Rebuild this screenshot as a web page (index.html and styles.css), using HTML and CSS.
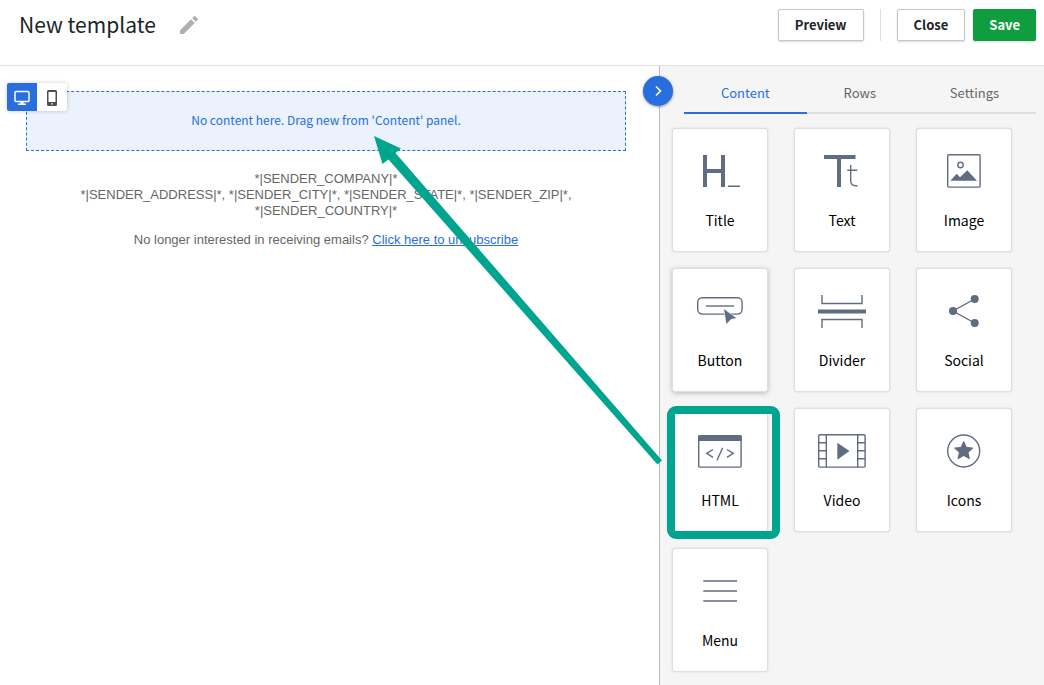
FILE: index.html
```html
<!DOCTYPE html>
<html lang="en">
<head>
<meta charset="utf-8">
<title>New template</title>
<link rel="stylesheet" href="styles.css">
</head>
<body>
<header class="topbar">
  <h1 class="topbar-title">New template</h1>
  <button class="edit-button" type="button" aria-label="Rename template">
    <svg width="24" height="24" viewBox="0 0 24 24" fill="#adafb1"><path d="M3 17.25V21h3.75L17.81 9.94l-3.75-3.75zM20.71 7.04a1 1 0 0 0 0-1.41l-2.34-2.34a1 1 0 0 0-1.41 0l-1.83 1.83 3.75 3.75z"/></svg>
  </button>
  <div class="actions">
    <button class="btn" type="button">Preview</button>
    <span class="separator"></span>
    <button class="btn" type="button">Close</button>
    <button class="btn btn-primary" type="button">Save</button>
  </div>
</header>
<div class="editor">
  <main class="canvas">
    <div class="device-switch">
      <button class="device device-active" type="button" aria-label="Desktop view">
        <svg width="16" height="16" viewBox="0 0 16 16"><rect x="1" y="1.500" width="14" height="10" rx="1" fill="none" stroke="#fff" stroke-width="1.500"/><path d="M6.500 12h3v1.500H12V15H4v-1.500h2.500z" fill="#fff"/></svg>
      </button>
      <button class="device" type="button" aria-label="Mobile view">
        <svg width="16" height="16" viewBox="0 0 16 16"><path fill="#4c4f52" fill-rule="evenodd" d="M4.500 0h7A1.500 1.500 0 0 1 13 1.500v13a1.500 1.500 0 0 1-1.500 1.500h-7A1.500 1.500 0 0 1 3 14.500v-13A1.500 1.500 0 0 1 4.500 0zM4.500 2v10h7V2zM7.200 13.200v1.300h1.600v-1.300z"/></svg>
      </button>
    </div>
    <div class="dropzone">No content here. Drag new from 'Content' panel.</div>
    <footer class="mail-footer">
      <p>*|SENDER_COMPANY|*<br>*|SENDER_ADDRESS|*, *|SENDER_CITY|*, *|SENDER_STATE|*, *|SENDER_ZIP|*,<br>*|SENDER_COUNTRY|*</p>
      <p>No longer interested in receiving emails? <a href="#unsubscribe">Click here to unsubscribe</a></p>
    </footer>
  </main>
  <aside class="panel">
    <button class="collapse" type="button" aria-label="Collapse panel">
      <svg width="12" height="12" viewBox="0 0 12 12" fill="none" stroke="#fff" stroke-width="1.600"><path d="M4 1.500 8.500 6 4 10.500"/></svg>
    </button>
    <div class="tabs" role="tablist">
      <button class="tab tab-active" type="button" role="tab" aria-selected="true">Content</button>
      <button class="tab" type="button" role="tab" aria-selected="false">Rows</button>
      <button class="tab" type="button" role="tab" aria-selected="false">Settings</button>
    </div>
    <div class="blocks">
      <button class="block" type="button">
        <svg class="icon" viewBox="0 0 48 48"><path class="solid" d="M7 8h4v14h14V8h4v32h-4V26H11v14H7zM32 38.500h12V40H32z"/></svg>
        <span>Title</span>
      </button>
      <button class="block" type="button">
        <svg class="icon" viewBox="0 0 48 48"><path class="solid" d="M6 8h31.500v4H23v28h-4V12H6z"/><path class="line" d="M32.700 18v15.500q0 5.200 5 5.200h1.800M29.300 23.300h10"/></svg>
        <span>Text</span>
      </button>
      <button class="block" type="button">
        <svg class="icon" viewBox="0 0 48 48"><rect class="line" x="7.700" y="7.700" width="32.400" height="32.400" rx="1"/><circle class="line" cx="20.500" cy="18" r="2.700"/><path class="solid" d="M10.300 33.700l6.400-7 3.300 3.600 7.300-7 9.700 10.400z"/></svg>
        <span>Image</span>
      </button>
      <button class="block block-raised" type="button">
        <svg class="icon" viewBox="0 0 48 48"><rect class="line" x="1.700" y="10.700" width="44.400" height="16.400" rx="4.500"/><path class="line" d="M10 19h28"/><path class="solid" stroke="#fff" stroke-width=".6" d="M27.600 21.500l13.400 9.800-5.800 1-5 5.200z"/></svg>
        <span>Button</span>
      </button>
      <button class="block" type="button">
        <svg class="icon" viewBox="0 0 48 48"><path class="solid" d="M0 22.500h48v4H0z"/><path class="line" d="M4 8v8.500h40V8M4 41v-8.500h40V41"/></svg>
        <span>Divider</span>
      </button>
      <button class="block" type="button">
        <svg class="icon" viewBox="0 0 48 48"><path class="line" d="M34.700 12 13 24l21.700 12"/><g class="solid"><circle cx="34.700" cy="12" r="4"/><circle cx="13" cy="24" r="4"/><circle cx="34.700" cy="36" r="4"/></g></svg>
        <span>Social</span>
      </button>
      <button class="block block-marked" type="button">
        <svg class="icon" viewBox="0 0 48 48"><rect class="line" x="2.700" y="8.700" width="42.400" height="31.400" rx="1"/><path class="solid" d="M2 8.500h43.700V14H2z"/><path class="line" d="M17 22.500l-6.300 3.800 6.300 4M26.700 20.700 21 33.300M31 22.500l6.300 3.800-6.300 4"/></svg>
        <span>HTML</span>
      </button>
      <button class="block" type="button">
        <svg class="icon" viewBox="0 0 48 48"><rect class="line" x=".7" y="7.700" width="46.400" height="32.400" rx="1"/><path class="line" d="M8.300 8v32M39.700 8v32M1 15.700h7.300M1 23.700h7.300M1 31.700h7.300M39.700 15.700H47M39.700 23.700H47M39.700 31.700H47"/><path class="solid" d="M19.300 15.700l12.200 8.400-12.200 8.600z"/></svg>
        <span>Video</span>
      </button>
      <button class="block" type="button">
        <svg class="icon" viewBox="0 0 48 48"><circle class="line" cx="23.700" cy="24" r="16"/><path class="solid" stroke="#606d80" stroke-width="1" stroke-linejoin="round" d="M23.700 14.500l2.700 5.900 6.400.7-4.800 4.300 1.400 6.300-5.700-3.200-5.700 3.200 1.400-6.300-4.800-4.300 6.400-.7z"/></svg>
        <span>Icons</span>
      </button>
      <button class="block" type="button">
        <svg class="icon" viewBox="0 0 48 48"><path class="line" d="M7.300 14H41M7.300 24H41M7.300 34H41"/></svg>
        <span>Menu</span>
      </button>
    </div>
    <svg class="arrow" viewBox="0 0 290 330" aria-hidden="true"><path d="M0 0l27 12.500-5.500 4.500L288 324.500l-4.500 4L14.500 23.500l-6 4.500z"/></svg>
  </aside>
</div>
</body>
</html>
```
FILE: styles.css
```css
* {
  box-sizing: border-box;
}

body {
  margin: 0;
  min-height: 100vh;
  display: flex;
  flex-direction: column;
  background: #fff;
  color: #202428;
  font-family: "Noto Sans CJK SC", "Open Sans", sans-serif;
  font-size: 13px;
  line-height: 20px;
}

button {
  padding: 0;
  border: 0;
  background: none;
  color: inherit;
  font: inherit;
}

svg {
  display: block;
}

.topbar {
  display: flex;
  align-items: flex-start;
  padding: 8px 8px 24px 19px;
  border-bottom: 1px solid #dfdfdf;
}

.topbar-title {
  margin: 0;
  font-size: 21px;
  font-weight: 400;
  line-height: 32px;
}

.edit-button {
  margin: 5px 0 0 21px;
}

.actions {
  display: flex;
  margin: 1px 0 0 auto;
  gap: 8px;
}

.btn {
  height: 32px;
  padding: 0 16px 1px;
  border: 1px solid #c4c6c8;
  border-radius: 2px;
  background: #fff;
  box-shadow: 0 1px 2px rgba(0, 0, 0, 0.15);
  font-weight: 700;
}

.btn-primary {
  border: 0;
  background: #0f9d3d;
  color: #fff;
}

.separator {
  width: 1px;
  margin: 0 8px;
  background: #dfdfdf;
}

.editor {
  flex: 1;
  display: flex;
}

.canvas {
  flex: 1;
  position: relative;
  padding: 25px 33px 24px 26px;
}

.device-switch {
  position: absolute;
  top: 17px;
  left: 7px;
  display: flex;
  border-radius: 2px;
  background: #fff;
  box-shadow: 0 0 4px rgba(0, 0, 0, 0.2);
}

.device {
  display: grid;
  place-items: center;
  width: 30px;
  height: 28px;
  padding-top: 2px;
}

.device-active {
  border-radius: 2px 0 0 2px;
  background: #286edf;
}

.dropzone {
  display: grid;
  place-items: center;
  height: 60px;
  padding-bottom: 2px;
  border: 1px dashed #286edf;
  background: #ebf2fc;
  color: #286edf;
  font-size: 12px;
}

.mail-footer {
  padding-top: 20px;
  color: #666;
  font-family: "Liberation Sans", Arial, sans-serif;
  font-size: 13px;
  line-height: 16px;
  text-align: center;
}

.mail-footer p {
  margin: 0 0 13px;
}

.mail-footer a {
  color: #286edf;
}

.panel {
  position: relative;
  width: 385px;
  border-left: 1px solid #bbb;
  background: #f5f5f5;
}

.collapse {
  position: absolute;
  top: 10px;
  left: -17px;
  display: grid;
  place-items: center;
  width: 30px;
  height: 30px;
  border-radius: 50%;
  background: #286edf;
  box-shadow: 0 1px 3px rgba(0, 0, 0, 0.4);
}

.tabs {
  display: flex;
  margin: 8px 8px 0 24px;
}

.tab {
  flex: 1 1 auto;
  height: 40px;
  border-bottom: 2px solid #dfdfdf;
  color: #666;
}

.tab-active {
  border-color: #286edf;
  color: #286edf;
}

.blocks {
  display: grid;
  grid-template-columns: repeat(3, 96px);
  gap: 16px 26px;
  padding: 14px 12px;
}

.block {
  position: relative;
  display: flex;
  flex-direction: column;
  align-items: center;
  gap: 15px;
  height: 124px;
  padding-top: 18px;
  border: 1px solid #dfdfdf;
  border-radius: 3px;
  background: #fff;
  box-shadow: 0 0 2px rgba(0, 0, 0, 0.15);
  color: #000;
  font-size: 14px;
}

.block-raised {
  box-shadow: 0 1px 5px rgba(0, 0, 0, 0.25);
}

.block-marked::after {
  content: "";
  position: absolute;
  inset: -3px -13px -8px -6px;
  border: 8px solid #00a590;
  border-radius: 9px;
}

.icon {
  width: 48px;
  height: 48px;
}

.solid {
  fill: #606d80;
}

.line {
  fill: none;
  stroke: #606d80;
  stroke-width: 1.4;
}

.arrow {
  position: absolute;
  top: 70px;
  left: -286px;
  width: 290px;
  height: 330px;
  fill: #00a590;
  pointer-events: none;
}
```
